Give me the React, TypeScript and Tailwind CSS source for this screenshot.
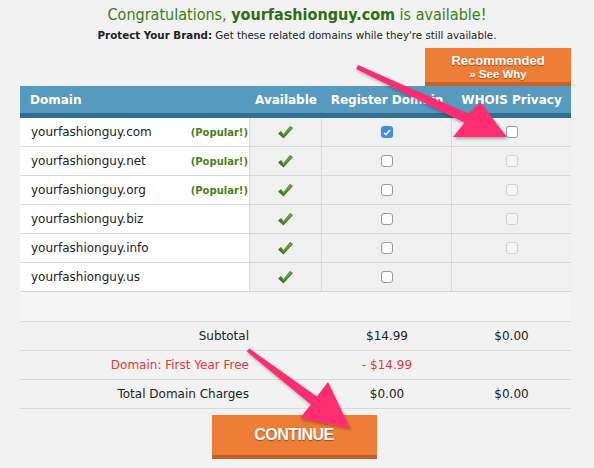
const rows = [
  { name: 'yourfashionguy.com', popular: true, reg: 'checked', whois: 'enabled' },
  { name: 'yourfashionguy.net', popular: true, reg: 'empty', whois: 'disabled' },
  { name: 'yourfashionguy.org', popular: true, reg: 'empty', whois: 'disabled' },
  { name: 'yourfashionguy.biz', popular: false, reg: 'empty', whois: 'disabled' },
  { name: 'yourfashionguy.info', popular: false, reg: 'empty', whois: 'disabled' },
  { name: 'yourfashionguy.us', popular: false, reg: 'empty', whois: 'none' },
];

const cols = 'grid grid-cols-[230px_72px_130px_119px]';

function Check() {
  return (
    <svg width="15" height="13" viewBox="0 0 15 13">
      <polygon points="0,7.5 3,5 5.5,8 12,0 15,2 5.5,12.5" fill="#3f7f22" />
      <polygon points="3,5.5 5.5,8.5 12,0.8 14,2 5.5,10" fill="#5fa83a" />
    </svg>
  );
}

function Box({ kind }: { kind: string }) {
  if (kind === 'none') return null;
  if (kind === 'checked')
    return (
      <div className="w-[12px] h-[12px] rounded-[3px] bg-[#3c8cf3] flex items-center justify-center">
        <svg width="8" height="7" viewBox="0 0 8 7">
          <path d="M1 3.8 L3 5.6 L7 1" stroke="white" strokeWidth="1.6" fill="none" />
        </svg>
      </div>
    );
  if (kind === 'disabled')
    return <div className="w-[12px] h-[12px] rounded-[3px] border border-[#d2d2d2] bg-[#f6f6f6]" />;
  return <div className="w-[12px] h-[12px] rounded-[3px] border border-[#9a9a9a] bg-white" />;
}

export default function App() {
  return (
    <div className="relative w-[594px] h-[468px] overflow-hidden bg-[#f2f2f2] font-['DejaVu_Sans',Verdana,sans-serif] text-[#222]">
      <div className="pt-[4px] text-center">
        <div className="text-[16px] leading-[22px] text-[#3c7b20] font-['DejaVu_Sans_Condensed','DejaVu_Sans',sans-serif] [font-stretch:condensed]">
          Congratulations, <b className="text-[#2f6c17]">yourfashionguy.com</b> is available!
        </div>
        <div className="text-[10.3px] leading-[16px] text-[#222] mt-[1px]">
          <b>Protect Your Brand:</b> Get these related domains while they're still available.
        </div>
      </div>

      <div className="mx-[20px] w-[551px]">
        <div className="flex justify-end mt-[5px]">
          <div className="w-[146px] h-[38px] bg-[#ee7d35] border-b-4 border-[#c8622b] flex flex-col items-center justify-center pt-[4px] font-['Liberation_Sans',Arial,sans-serif] font-bold text-white [text-shadow:0_1px_1px_rgba(0,0,0,0.35)]">
            <div className="text-[13px] leading-[14px]">Recommended</div>
            <div className="text-[11.5px] leading-[13px]">» See Why</div>
          </div>
        </div>

        <div className={`${cols} h-[27px] bg-[#5899bf] border-b-[5px] border-[#2f6e8f] box-content text-white font-bold text-[12px] items-center`}>
          <div className="pl-[10px]">Domain</div>
          <div className="text-center">Available</div>
          <div className="text-center">Register Domain</div>
          <div className="text-center">WHOIS Privacy</div>
        </div>

        <div className="border-l border-r border-[#d6d6d6]">
          {rows.map((r) => (
            <div key={r.name} className={`${cols} h-[29px] border-b border-[#d9d9d9] -mr-[1px] -ml-[1px]`}>
              <div className="bg-white border-r border-[#d9d9d9] flex items-center justify-between pl-[11px] pr-[1px] text-[12px]">
                <span>{r.name}</span>
                {r.popular && <span className="text-[10px] font-bold text-[#4a7e1d]">(Popular!)</span>}
              </div>
              <div className="bg-[#f0f0f0] border-r border-[#d9d9d9] flex items-center justify-center">
                <Check />
              </div>
              <div className="bg-[#f0f0f0] border-r border-[#d9d9d9] flex items-center justify-center">
                <Box kind={r.reg} />
              </div>
              <div className="bg-[#f0f0f0] flex items-center justify-center">
                <Box kind={r.whois} />
              </div>
            </div>
          ))}
        </div>
        <div className="h-[29px] bg-[#f5f5f5]" />

        <div className="text-[12px]">
          {[
            { label: 'Subtotal', a: '$14.99', b: '$0.00', red: false },
            { label: 'Domain: First Year Free', a: '- $14.99', b: '', red: true },
            { label: 'Total Domain Charges', a: '$0.00', b: '$0.00', red: false },
          ].map((s) => (
            <div key={s.label} className={`${cols} h-[29px] border-t border-[#d9d9d9] items-center ${s.red ? 'text-[#e8382f]' : ''}`}>
              <div className="text-right pr-[1px]">{s.label}</div>
              <div />
              <div className="text-center">{s.a}</div>
              <div className="text-center text-[#222]">{s.b}</div>
            </div>
          ))}
          <div className="border-t border-[#d9d9d9]" />
        </div>

        <div className="flex justify-center mt-[6px] pr-[3px]">
          <div className="w-[165px] h-[44px] bg-[#ee7d35] border-b-4 border-[#c2602a] flex items-center justify-center font-['Liberation_Sans',Arial,sans-serif] font-bold text-white text-[16px] tracking-[-0.5px] [text-shadow:0_1px_1px_rgba(0,0,0,0.35)]">
            CONTINUE
          </div>
        </div>
      </div>

      <svg className="absolute inset-0 pointer-events-none" width="594" height="468" viewBox="0 0 594 468">
        <defs>
          <filter id="sh" x="-10%" y="-10%" width="130%" height="130%">
            <feDropShadow dx="1" dy="2" stdDeviation="1.5" floodColor="#000" floodOpacity="0.3" />
          </filter>
        </defs>
        <polygon
          points="358,65 468.7,113.7 480,102 507,137 453,137 464.5,122.7 356,69"
          fill="#ff2d6f"
          filter="url(#sh)"
        />
        <polygon
          points="249.2,348.4 316.9,396.4 328,382 350,428 300,418 310.9,404.4 246.8,351.6"
          fill="#ff2d6f"
          filter="url(#sh)"
        />
      </svg>
    </div>
  );
}
